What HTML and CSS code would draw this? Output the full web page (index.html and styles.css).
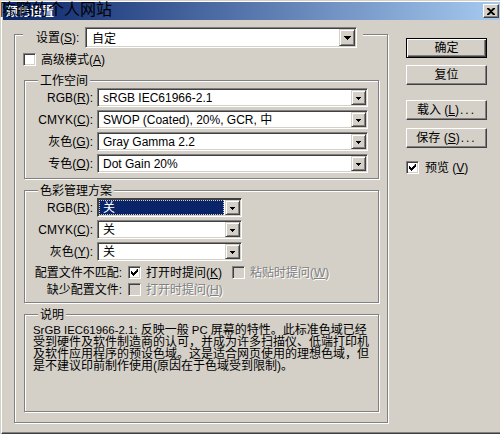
FILE: index.html
```html
<!DOCTYPE html>
<html lang="zh">
<head>
<meta charset="utf-8">
<title>颜色设置</title>
<link rel="stylesheet" href="styles.css">
</head>
<body>
<div class="window">
  <div class="titlebar">
    <span class="title">颜色设置</span>
    <span class="close"><svg width="8" height="7" viewBox="0 0 8 7"><path d="M0 0h2l2 2 2-2h2v1L5 3.5 8 6v1H6L4 5 2 7H0V6l3-2.5L0 1z"/></svg></span>
  </div>
  <div class="client">
    <div class="group outer">
      <div class="settings-row">
        <span class="slbl">设置(<u>S</u>):</span>
        <div class="combo big">
          <span class="field">自定</span>
          <span class="drop"><svg width="7" height="4" viewBox="0 0 7 4"><path d="M0 0h7v1h-1v1h-1v1h-1v1h-1v-1h-1v-1h-1v-1h-1z"/></svg></span>
        </div>
      </div>
      <div class="check-row adv"><span class="cb"></span><span>高级模式(<u>A</u>)</span></div>

      <div class="group ws">
        <span class="legend">工作空间</span>
        <div class="rows">
          <div class="row"><span class="rl">RGB(<u>R</u>):</span><div class="combo long"><span class="field">sRGB IEC61966-2.1</span><span class="drop"><svg class="sa" width="5" height="3" viewBox="0 0 5 3"><path d="M0 0h5v1h-1v1h-1v1h-1v-1h-1v-1h-1z"/></svg></span></div></div>
          <div class="row"><span class="rl">CMYK(<u>C</u>):</span><div class="combo long"><span class="field">SWOP (Coated), 20%, GCR, 中</span><span class="drop"><svg class="sa" width="5" height="3" viewBox="0 0 5 3"><path d="M0 0h5v1h-1v1h-1v1h-1v-1h-1v-1h-1z"/></svg></span></div></div>
          <div class="row"><span class="rl">灰色(<u>G</u>):</span><div class="combo long"><span class="field">Gray Gamma 2.2</span><span class="drop"><svg class="sa" width="5" height="3" viewBox="0 0 5 3"><path d="M0 0h5v1h-1v1h-1v1h-1v-1h-1v-1h-1z"/></svg></span></div></div>
          <div class="row"><span class="rl">专色(<u>O</u>):</span><div class="combo long"><span class="field">Dot Gain 20%</span><span class="drop"><svg class="sa" width="5" height="3" viewBox="0 0 5 3"><path d="M0 0h5v1h-1v1h-1v1h-1v-1h-1v-1h-1z"/></svg></span></div></div>
        </div>
      </div>

      <div class="group cm">
        <span class="legend">色彩管理方案</span>
        <div class="rows">
          <div class="row"><span class="rl">RGB(<u>R</u>):</span><div class="combo short focus"><span class="field">关</span><span class="drop"><svg class="sa" width="5" height="3" viewBox="0 0 5 3"><path d="M0 0h5v1h-1v1h-1v1h-1v-1h-1v-1h-1z"/></svg></span></div></div>
          <div class="row"><span class="rl">CMYK(<u>C</u>):</span><div class="combo short"><span class="field">关</span><span class="drop"><svg class="sa" width="5" height="3" viewBox="0 0 5 3"><path d="M0 0h5v1h-1v1h-1v1h-1v-1h-1v-1h-1z"/></svg></span></div></div>
          <div class="row"><span class="rl">灰色(<u>Y</u>):</span><div class="combo short"><span class="field">关</span><span class="drop"><svg class="sa" width="5" height="3" viewBox="0 0 5 3"><path d="M0 0h5v1h-1v1h-1v1h-1v-1h-1v-1h-1z"/></svg></span></div></div>
        </div>
        <div class="opt-row first">
          <span class="ol">配置文件不匹配:</span>
          <span class="opt opt1"><span class="cb checked"><svg width="7" height="7" viewBox="0 0 7 7"><path d="M6 0h1v3h-1v1h-1v1h-1v1h-1v1h-1v-1h-1v-1h-1v-3h1v1h1v1h1v-1h1v-1h1z"/></svg></span><span>打开时提问(<u>K</u>)</span></span>
          <span class="opt dis"><span class="cb"></span><span>粘贴时提问(<u>W</u>)</span></span>
        </div>
        <div class="opt-row">
          <span class="ol">缺少配置文件:</span>
          <span class="opt dis"><span class="cb"></span><span>打开时提问(<u>H</u>)</span></span>
        </div>
      </div>

      <div class="group desc">
        <span class="legend">说明</span>
        <p class="text"><span class="lat">SrGB IEC61966-2.1: </span>反映一般<span class="lat"> PC </span>屏幕的特性。此标准色域已经<br>受到硬件及软件制造商的认可，并成为许多扫描仪、低端打印机<br>及软件应用程序的预设色域。这是适合网页使用的理想色域，但<br>是不建议印前制作使用(原因在于色域受到限制)。</p>
      </div>
    </div>

    <div class="side">
      <div class="btn default">确定</div>
      <div class="btn reset">复位</div>
      <div class="btn load">载入 (<u>L</u>)<span class="dots">...</span></div>
      <div class="btn save">保存 (<u>S</u>)<span class="dots">...</span></div>
      <div class="check-row preview"><span class="cb checked"><svg width="7" height="7" viewBox="0 0 7 7"><path d="M6 0h1v3h-1v1h-1v1h-1v1h-1v1h-1v-1h-1v-1h-1v-3h1v1h1v1h1v-1h1v-1h1z"/></svg></span><span>预览 (<u>V</u>)</span></div>
    </div>
  </div>
  <span class="watermark">陈鹏的个人网站</span>
</div>
</body>
</html>
```

FILE: styles.css
```css
* { box-sizing: border-box; }
html, body { margin: 0; padding: 0; }
body {
  width: 500px;
  height: 434px;
  overflow: hidden;
  background: #D4D0C8;
  font-family: "Liberation Sans", "Noto Sans CJK SC", sans-serif;
  font-size: 12px;
  line-height: 12px;
  color: #000;
}
u { text-decoration: underline; text-underline-offset: 1px; }

.window {
  position: relative;
  width: 499px;
  height: 433px;
  margin: 1px 0 0 1px;
  border-left: 1px solid #fff;
  border-top: 1px solid #fff;
  border-bottom: 1px solid #404040;
  box-shadow: inset 0 -1px #808080;
  padding-left: 1px;
  background: #D4D0C8;
}

.titlebar {
  height: 18px;
  display: flex;
  align-items: center;
  justify-content: space-between;
  padding: 0 1px 0 3px;
  background: linear-gradient(to right, #0A246A, #A6CAF0);
}
.title {
  color: #fff;
  font-weight: bold;
  font-family: "Noto Sans CJK SC", sans-serif;
  font-size: 12px;
  line-height: 12px;
}
.close {
  width: 16px;
  height: 14px;
  display: flex;
  align-items: center;
  justify-content: center;
  background: #D4D0C8;
  border: 1px solid;
  border-color: #fff #404040 #404040 #fff;
  box-shadow: inset -1px -1px #808080;
}
.close svg { display: block; margin-left: -1px; }

.watermark {
  position: absolute;
  left: -2px;
  top: -2px;
  font-family: "Noto Sans CJK SC", sans-serif;
  font-size: 16px;
  line-height: 16px;
  color: #000;
  white-space: nowrap;
}

.client {
  display: flex;
  align-items: flex-start;
  padding: 14px 0 0 11px;
}

/* etched group box */
.group {
  border: 1px solid #808080;
  box-shadow: 1px 1px 0 #fff, inset 1px 1px 0 #fff;
}
.legend {
  display: block;
  width: fit-content;
  margin: -7px 0 0 13px;
  padding: 0 2px;
  background: #D4D0C8;
  font-family: "Noto Sans CJK SC", sans-serif;
  line-height: 12px;
}

.outer {
  width: 374px;
  height: 389px;
}

.settings-row {
  display: flex;
  align-items: center;
  width: fit-content;
  height: 21px;
  margin: -8px 0 0 8px;
  padding: 0 6px 0 13px;
  background: #D4D0C8;
}
.slbl { width: 49px; }

.check-row {
  display: flex;
  align-items: center;
  gap: 5px;
  height: 13px;
}
.adv { margin: 5px 0 0 8px; }

.cb {
  width: 13px;
  height: 13px;
  flex: none;
  display: flex;
  align-items: center;
  justify-content: center;
  background: #fff;
  border: 1px solid;
  border-color: #808080 #fff #fff #808080;
  box-shadow: inset 1px 1px #404040, inset -1px -1px #D4D0C8;
}
.cb svg { display: block; }

.combo {
  display: flex;
  height: 19px;
  background: #fff;
  border: 1px solid;
  border-color: #808080 #fff #fff #808080;
  box-shadow: inset 1px 1px #404040, inset -1px -1px #D4D0C8;
  padding: 1px;
}
.combo.big { width: 272px; height: 21px; }
.combo.long { width: 271px; }
.combo.short { width: 145px; }
.field {
  flex: 1;
  display: flex;
  align-items: center;
  padding-left: 4px;
  white-space: nowrap;
  overflow: hidden;
}
.big .field { padding-left: 5px; font-family: "Noto Sans CJK SC", sans-serif; }
.drop {
  width: 15px;
  flex: none;
  display: flex;
  align-items: center;
  justify-content: center;
  background: #D4D0C8;
  border: 1px solid;
  border-color: #D4D0C8 #404040 #404040 #D4D0C8;
  box-shadow: inset 1px 1px #fff, inset -1px -1px #808080;
}
.big .drop { width: 16px; }
.drop svg { display: block; }
.drop .sa { margin-top: 2px; }

.focus { border-color: #404040 #fff #fff #404040; }
.focus .field {
  background: #0A246A;
  color: #fff;
  outline: 1px dotted #D4D0C8;
  outline-offset: -1px;
  margin-right: 1px;
}

.ws {
  height: 99px;
  margin: 14px 8px 0 9px;
}
.cm {
  height: 113px;
  margin: 11px 8px 0 9px;
}
.desc {
  height: 98px;
  margin: 11px 8px 0 9px;
}

.rows {
  display: flex;
  flex-direction: column;
  gap: 3px;
  margin-top: 2px;
}
.row {
  display: flex;
  align-items: center;
}
.rl {
  width: 68px;
  text-align: right;
  margin-right: 4px;
  white-space: nowrap;
}

.opt-row {
  display: flex;
  align-items: center;
  height: 13px;
  margin-top: 4px;
}
.opt-row.first { margin-top: 5px; }
.ol {
  width: 97px;
  text-align: right;
  margin-right: 6px;
  white-space: nowrap;
}
.opt {
  display: flex;
  align-items: center;
  gap: 5px;
  white-space: nowrap;
}
.opt1 { width: 104px; }
.dis { color: #808080; text-shadow: 1px 1px 0 #fff; }
.dis .cb { background: #D4D0C8; }

.text {
  margin: 4px 0 0 8px;
  line-height: 12px;
  white-space: nowrap;
}
.lat { font-size: 11.4px; }

.side {
  display: flex;
  flex-direction: column;
  margin: 4px 0 0 18px;
}
.btn {
  width: 81px;
  height: 20px;
  display: flex;
  align-items: center;
  justify-content: center;
  background: #D4D0C8;
  border: 1px solid;
  border-color: #fff #404040 #404040 #fff;
  box-shadow: inset -1px -1px #808080;
  white-space: nowrap;
}
.btn.default {
  border-color: #000;
  box-shadow: inset 1px 1px #fff, inset -1px -1px #404040, inset -2px -2px #808080;
}
.dots { letter-spacing: 2px; margin-left: 1px; }
.reset { margin-top: 7px; }
.load { margin-top: 15px; }
.save { margin-top: 8px; }
.preview { margin-top: 13px; gap: 6px; }
```
